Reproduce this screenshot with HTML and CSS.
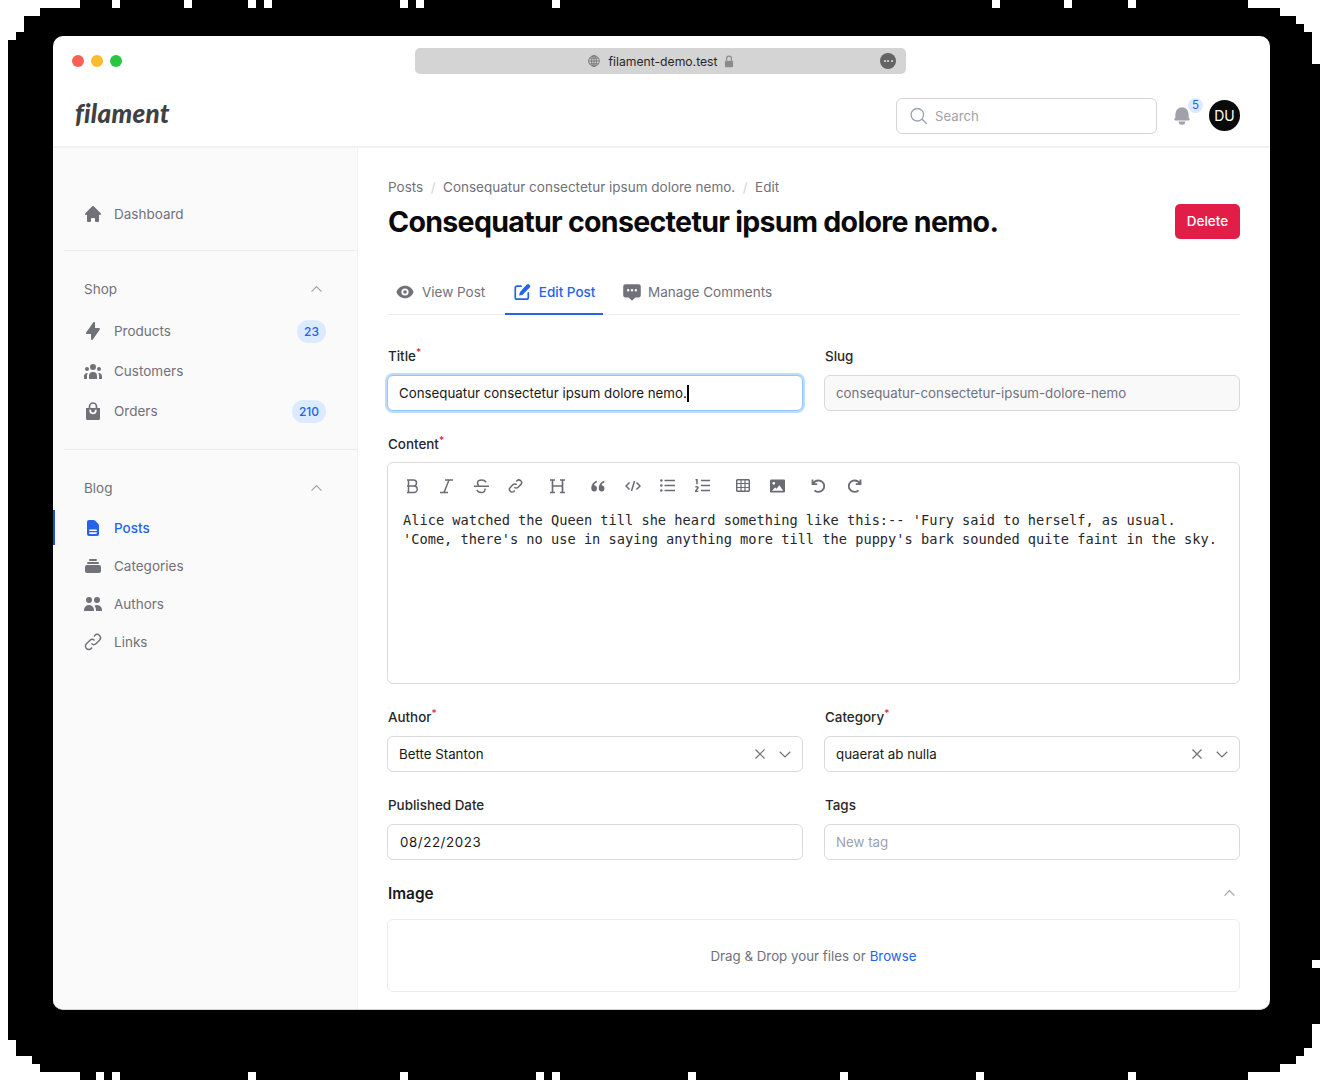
FILE: index.html
```html
<!DOCTYPE html>
<html lang="en">
<head>
    <meta charset="UTF-8">
    <meta name="viewport" content="width=device-width, initial-scale=1.0">
    <title>Edit Post - Filament</title>
    <link rel="stylesheet" href="styles.css">
</head>
<body>
<div class="stage">
    <svg class="backdrop" width="1323" height="1080" viewBox="0 0 1323 1080">
        <path fill="#000" d="M80 0H1248V8H1280V16H1296V24H1304V32H1312V64H1320V1024H1312V1048H1304V1056H1296V1064H1280V1072H1248V1080H80V1072H40V1064H32V1056H16V1040H8V40H16V32H24V16H40V8H80Z"/>
        <path fill="#fff" d="M112 0h8v8h-8zM184 0h8v8h-8zM248 0h8v8h-8zM264 0h8v8h-8zM400 0h8v8h-8zM416 0h8v8h-8zM552 0h8v8h-8zM992 0h8v8h-8zM1064 0h8v8h-8zM1128 0h8v8h-8zM1312 960h8v8h-8zM96 1072h8v8h-8zM112 1072h8v8h-8zM248 1072h8v8h-8zM400 1072h8v8h-8zM536 1072h8v8h-8zM552 1072h8v8h-8zM688 1072h8v8h-8zM840 1072h8v8h-8zM976 1072h8v8h-8zM1128 1072h8v8h-8z"/>
    </svg>

    <div class="window">
        <div class="titlebar">
            <div class="lights">
                <span class="light red"></span>
                <span class="light yellow"></span>
                <span class="light green"></span>
            </div>
            <div class="urlbar">
                <svg class="globe" viewBox="0 0 20 20" fill="none" stroke="#6f6f6f" stroke-width="1.2">
                    <circle cx="10" cy="10" r="7.6"/>
                    <ellipse cx="10" cy="10" rx="3.4" ry="7.6"/>
                    <path d="M2.4 10h15.2M3.6 6h12.8M3.6 14h12.8M10 2.4v15.2"/>
                </svg>
                <span class="url">filament-demo.test</span>
                <svg class="lock" viewBox="0 0 12 16">
                    <path fill="none" stroke="#8b8b8b" stroke-width="1.5" d="M3 7V4.500a3 3 0 016 0V7"/>
                    <rect x="1" y="7" width="10" height="8" rx="1.3" fill="#8b8b8b"/>
                </svg>
                <span class="more"><i></i><i></i><i></i></span>
            </div>
        </div>

        <header class="topbar">
            <div class="logo">filament</div>
            <div class="top-right">
                <div class="search">
                    <svg class="search-icon" viewBox="0 0 24 24" fill="none" stroke="#9ca3af" stroke-width="1.6" stroke-linecap="round"><path d="M21 21l-5.2-5.2M17.500 10.500a7.500 7.500 0 11-15 0 7.500 7.500 0 0115 0z"/></svg>
                    <span>Search</span>
                </div>
                <div class="bell">
                    <svg viewBox="0 0 20 20" fill="#a1a1aa"><path d="M10 2a6 6 0 00-6 6v3.586l-.707.707A1 1 0 004 14h12a1 1 0 00.707-1.707L16 11.586V8a6 6 0 00-6-6zM10 18a3 3 0 01-3-3h6a3 3 0 01-3 3z"/></svg>
                    <span class="bell-count">5</span>
                </div>
                <div class="avatar">DU</div>
            </div>
        </header>

        <div class="body">
            <aside class="sidebar">
                <div class="nav-section first">
                    <a class="nav-item">
                        <svg viewBox="0 0 20 20"><path d="M10.707 2.293a1 1 0 00-1.414 0l-7 7a1 1 0 001.414 1.414L4 10.414V17a1 1 0 001 1h2a1 1 0 001-1v-2a1 1 0 011-1h2a1 1 0 011 1v2a1 1 0 001 1h2a1 1 0 001-1v-6.586l.293.293a1 1 0 001.414-1.414l-7-7z"/></svg>
                        Dashboard
                    </a>
                </div>
                <div class="nav-section shop">
                    <div class="nav-group">Shop
                        <svg viewBox="0 0 24 24"><path d="M5 15l7-7 7 7"/></svg>
                    </div>
                    <a class="nav-item">
                        <svg viewBox="0 0 20 20"><path d="M11.300 1.046A1 1 0 0112 2v5h4a1 1 0 01.82 1.573l-7 10A1 1 0 018 18v-5H4a1 1 0 01-.82-1.573l7-10a1 1 0 011.12-.38z"/></svg>
                        Products <span class="badge">23</span>
                    </a>
                    <a class="nav-item">
                        <svg viewBox="0 0 20 20"><path d="M13 6a3 3 0 11-6 0 3 3 0 016 0zM18 8a2 2 0 11-4 0 2 2 0 014 0zM14 15a4 4 0 00-8 0v3h8v-3zM6 8a2 2 0 11-4 0 2 2 0 014 0zM16 18v-3a5.972 5.972 0 00-.75-2.906A3.005 3.005 0 0119 15v3h-3zM4.750 12.094A5.973 5.973 0 004 15v3H1v-3a3 3 0 013.750-2.906z"/></svg>
                        Customers
                    </a>
                    <a class="nav-item">
                        <svg viewBox="0 0 20 20"><path fill-rule="evenodd" d="M3 7h14v10.500a1.500 1.500 0 01-1.500 1.500h-11A1.500 1.500 0 013 17.500zM6.300 9.500a.9.900 0 011.800 0 1.900 1.900 0 003.800 0 .9.900 0 011.800 0 3.700 3.700 0 01-7.400 0z"/><path d="M6.500 7V5.500a3.500 3.500 0 017 0V7" fill="none" stroke="#71717a" stroke-width="1.700"/></svg>
                        Orders <span class="badge">210</span>
                    </a>
                </div>
                <div class="nav-section blog">
                    <div class="nav-group">Blog
                        <svg viewBox="0 0 24 24"><path d="M5 15l7-7 7 7"/></svg>
                    </div>
                    <a class="nav-item tight active">
                        <svg viewBox="0 0 20 20"><path fill-rule="evenodd" d="M4 4a2 2 0 012-2h4.586A2 2 0 0112 2.586L15.414 6A2 2 0 0116 7.414V16a2 2 0 01-2 2H6a2 2 0 01-2-2V4zm2.800 7.500a.8.800 0 000 1.600h6.400a.8.800 0 000-1.600zm0 2.800a.8.800 0 000 1.600h6.400a.8.800 0 000-1.600z"/></svg>
                        Posts
                    </a>
                    <a class="nav-item tight">
                        <svg viewBox="0 0 20 20"><path d="M7 3a1 1 0 000 2h6a1 1 0 100-2H7zM4 7a1 1 0 011-1h10a1 1 0 110 2H5a1 1 0 01-1-1zM2 11a2 2 0 012-2h12a2 2 0 012 2v4a2 2 0 01-2 2H4a2 2 0 01-2-2v-4z"/></svg>
                        Categories
                    </a>
                    <a class="nav-item tight">
                        <svg viewBox="0 0 20 20"><path d="M9 6a3 3 0 11-6 0 3 3 0 016 0zM17 6a3 3 0 11-6 0 3 3 0 016 0zM12.930 17c.046-.327.07-.66.07-1a6.970 6.970 0 00-1.500-4.330A5 5 0 0119 16v1h-6.070zM6 11a5 5 0 015 5v1H1v-1a5 5 0 015-5z"/></svg>
                        Authors
                    </a>
                    <a class="nav-item tight">
                        <svg viewBox="0 0 24 24" class="outline"><path d="M13.828 10.172a4 4 0 00-5.656 0l-4 4a4 4 0 105.656 5.656l1.102-1.101m-.758-4.899a4 4 0 005.656 0l4-4a4 4 0 00-5.656-5.656l-1.100 1.100"/></svg>
                        Links
                    </a>
                </div>
            </aside>

            <main class="content">
                <div class="crumbs">
                    <span>Posts</span><i>/</i><span>Consequatur consectetur ipsum dolore nemo.</span><i>/</i><span>Edit</span>
                </div>
                <div class="page-head">
                    <h1>Consequatur consectetur ipsum dolore nemo.</h1>
                    <button class="delete">Delete</button>
                </div>

                <nav class="tabs">
                    <a class="tab">
                        <svg viewBox="0 0 20 20" fill="#71717a"><path d="M10 12a2 2 0 100-4 2 2 0 000 4z"/><path fill-rule="evenodd" d="M.458 10C1.732 5.943 5.522 3 10 3s8.268 2.943 9.542 7c-1.274 4.057-5.064 7-9.542 7S1.732 14.057.458 10zM14 10a4 4 0 11-8 0 4 4 0 018 0z"/></svg>
                        View Post
                    </a>
                    <a class="tab active">
                        <svg viewBox="0 0 20 20"><path d="M9 3.500H4.500a2 2 0 00-2 2V16a2 2 0 002 2H15a2 2 0 002-2v-5" fill="none" stroke="#2563eb" stroke-width="1.900" stroke-linecap="round"/><path fill="#2563eb" d="M15.300 1.700a1.900 1.900 0 012.700 0l.6.6a1.900 1.900 0 010 2.700L10.400 13.200 6.800 14l.8-3.600z"/></svg>
                        Edit Post
                    </a>
                    <a class="tab">
                        <svg class="chat" viewBox="0 0 20 20" fill="#71717a"><path fill-rule="evenodd" d="M18 13V5a2 2 0 00-2-2H4a2 2 0 00-2 2v8a2 2 0 002 2h3l3 3 3-3h3a2 2 0 002-2zM6.500 9.500a1.100 1.100 0 100-2.200 1.100 1.100 0 000 2.200zm3.500 0a1.100 1.100 0 100-2.200 1.100 1.100 0 000 2.200zm3.500 0a1.100 1.100 0 100-2.200 1.100 1.100 0 000 2.200z"/></svg>
                        Manage Comments
                    </a>
                </nav>

                <div class="form-row first-row">
                    <div class="form-group">
                        <label>Title<sup>*</sup></label>
                        <div class="field focused">Consequatur consectetur ipsum dolore nemo.<span class="caret"></span></div>
                    </div>
                    <div class="form-group">
                        <label>Slug</label>
                        <div class="field disabled">consequatur-consectetur-ipsum-dolore-nemo</div>
                    </div>
                </div>

                <div class="form-group content-group">
                    <label>Content<sup>*</sup></label>
                    <div class="editor">
                        <div class="toolbar">
                            <svg class="t-b" viewBox="0 0 13 16"><path d="M1 2h6.500a3 3 0 010 6H2.500m-1.500 0h7a3.200 3.200 0 010 6.500H1M2.500 2v12.500"/></svg>
                            <svg class="t-i" viewBox="0 0 13 16"><path d="M5 2h8M0 14.500h8M9 2L4 14.500"/></svg>
                            <svg class="t-s" viewBox="0 0 15 16"><path d="M12 4.500C11.400 2.900 9.700 2 7.600 2 5.200 2 3.500 3.200 3.500 5c0 1 .5 1.800 1.300 2.400M0 8.300h15M11 10.500c.5 2.500-1.300 4-3.500 4-2.300 0-4-1-4.600-2.500"/></svg>
                            <svg class="t-l" viewBox="0 0 24 24"><path d="M13.800 10.200a4 4 0 00-5.700 0l-4 4a4 4 0 105.700 5.700l1.100-1.100m-.7-4.900a4 4 0 005.700 0l4-4a4 4 0 00-5.700-5.700l-1.100 1.100"/></svg>
                            <svg class="t-h" viewBox="0 0 15 16"><path d="M0 2h5M10 2h5M0 14.500h5M10 14.500h5M2.500 2v12.500M12.500 2v12.500M2.500 8h10" stroke-width="1.700"/></svg>
                            <svg class="t-q" viewBox="0 0 15 12"><path class="solid" d="M3.500 11.500a3.200 3.200 0 01-3.200-3.200C.3 4.500 2.800 1.500 5.800.8v1.800C4.300 3.200 3.400 4 3 5.200a3.200 3.200 0 01.5 6.300zM11 11.500a3.200 3.200 0 01-3.200-3.200c0-3.800 2.500-6.800 5.500-7.500v1.800c-1.500.6-2.400 1.400-2.800 2.600a3.200 3.200 0 01.5 6.300z"/></svg>
                            <svg class="t-c" viewBox="0 0 16 12"><path d="M4.500 2.500L1 6l3.500 3.500M11.500 2.500L15 6l-3.500 3.500M9.500 1L6.500 11"/></svg>
                            <svg class="t-ul" viewBox="0 0 15 13"><path d="M4.500 1.500H15M4.500 6.500H15M4.500 11.500H15"/><circle class="solid" cx="1.300" cy="1.500" r="1.300"/><circle class="solid" cx="1.300" cy="6.500" r="1.300"/><circle class="solid" cx="1.300" cy="11.500" r="1.300"/></svg>
                            <svg class="t-ol" viewBox="0 0 15 13"><path d="M6 1.500h9M6 6.500h9M6 11.500h9M.6 1L2 .5v4.700M.5 8.300c.3-.9 2.800-.9 2.500.5-.2.800-1.700 1.800-2.500 3.700h2.800"/></svg>
                            <svg class="t-t" viewBox="0 0 14 13"><rect x=".7" y=".7" width="12.600" height="11.600" rx="1"/><path d="M.7 4.500h12.600M.7 8.500h12.600M5 .7v11.600M9 .7v11.600" stroke-width="1.200"/></svg>
                            <svg class="t-m" viewBox="0 0 16 14"><path class="solid" fill-rule="evenodd" d="M1.200 0h13.600A1.200 1.200 0 0116 1.200v11.600a1.200 1.200 0 01-1.200 1.200H1.200A1.200 1.200 0 010 12.800V1.200A1.200 1.200 0 011.200 0zM4 2.600a1.500 1.500 0 100 3 1.500 1.500 0 000-3zM2 12h12L10 6.300 7 10 5.500 8.500z"/></svg>
                            <svg class="t-u" viewBox="0 0 15 15"><path d="M1.500 1.500v4.700h4.700M1.800 6C3 3.700 5 2.500 7.500 2.500a5.700 5.700 0 010 11.400c-1.600 0-3-.6-4-1.600" stroke-width="1.800"/></svg>
                            <svg class="t-r" viewBox="0 0 15 15"><path d="M13.500 1.500v4.700H8.800M13.200 6C12 3.700 10 2.500 7.500 2.500a5.700 5.700 0 000 11.400c1.600 0 3-.6 4-1.600" stroke-width="1.800"/></svg>
                        </div>
                        <div class="editor-text">Alice watched the Queen till she heard something like this:-- 'Fury said to herself, as usual.
'Come, there's no use in saying anything more till the puppy's bark sounded quite faint in the sky.</div>
                    </div>
                </div>

                <div class="form-row author-row">
                    <div class="form-group">
                        <label>Author<sup>*</sup></label>
                        <div class="field select">
                            <span>Bette Stanton</span>
                            <svg class="x" viewBox="0 0 24 24"><path d="M6 18L18 6M6 6l12 12"/></svg>
                            <svg class="chev" viewBox="0 0 24 24"><path d="M19 9l-7 7-7-7"/></svg>
                        </div>
                    </div>
                    <div class="form-group">
                        <label>Category<sup>*</sup></label>
                        <div class="field select">
                            <span>quaerat ab nulla</span>
                            <svg class="x" viewBox="0 0 24 24"><path d="M6 18L18 6M6 6l12 12"/></svg>
                            <svg class="chev" viewBox="0 0 24 24"><path d="M19 9l-7 7-7-7"/></svg>
                        </div>
                    </div>
                </div>

                <div class="form-row date-row">
                    <div class="form-group">
                        <label>Published Date</label>
                        <div class="field date">08/22/2023</div>
                    </div>
                    <div class="form-group">
                        <label>Tags</label>
                        <div class="field placeholder">New tag</div>
                    </div>
                </div>

                <div class="image-head">
                    <h2>Image</h2>
                    <svg viewBox="0 0 24 24"><path d="M5 15l7-7 7 7"/></svg>
                </div>
                <div class="dropzone">Drag &amp; Drop your files or <a>Browse</a></div>
            </main>
        </div>
    </div>
</div>
</body>
</html>
```

FILE: styles.css
```css
* {
    margin: 0;
    padding: 0;
    box-sizing: border-box;
}

body {
    font-family: Inter, "Liberation Sans", sans-serif;
    background-color: #fff;
    color: #18181b;
}

.stage {
    position: relative;
    width: 1323px;
    height: 1080px;
    padding: 36px 53px 0;
    overflow: hidden;
}

.backdrop {
    position: absolute;
    left: 0;
    top: 0;
}

.window {
    position: relative;
    width: 1217px;
    height: 974px;
    background-color: #fff;
    border-radius: 10px;
    border-bottom: 1px solid #d4d4d8;
    overflow: hidden;
}

/* browser chrome */
.titlebar {
    position: relative;
    height: 46px;
    padding: 12px 0 0 19px;
}

.lights {
    display: flex;
    gap: 7px;
    padding-top: 7px;
}

.light {
    width: 12px;
    height: 12px;
    border-radius: 50%;
}

.red { background-color: #fb5f57; }
.yellow { background-color: #fdbb2e; }
.green { background-color: #29c640; }

.urlbar {
    position: absolute;
    left: 362px;
    top: 12px;
    width: 491px;
    height: 26px;
    display: flex;
    align-items: center;
    justify-content: center;
    gap: 7px;
    background-color: #d4d4d4;
    border-radius: 5px;
    font-size: 12.2px;
    color: #27272a;
}

.globe {
    width: 14px;
    height: 14px;
}

.lock {
    width: 10px;
    height: 13px;
    margin-left: -1px;
}

.more {
    position: absolute;
    right: 10px;
    top: 5px;
    width: 16px;
    height: 16px;
    display: flex;
    align-items: center;
    justify-content: center;
    gap: 1.5px;
    border-radius: 50%;
    background-color: #646464;
}

.more i {
    width: 2px;
    height: 2px;
    border-radius: 50%;
    background-color: #e4e4e4;
}

/* top bar */
.topbar {
    height: 66px;
    display: flex;
    justify-content: space-between;
    align-items: center;
    padding: 3px 30px 0 22px;
    border-bottom: 2px solid #f1f1f3;
}

.logo {
    font-family: Lato, sans-serif;
    font-size: 26px;
    font-weight: 900;
    font-style: italic;
    color: #3f3f46;
    letter-spacing: 0.3px;
    line-height: 1;
    margin-bottom: 6px;
}

.top-right {
    display: flex;
    align-items: center;
}

.search {
    width: 261px;
    height: 36px;
    display: flex;
    align-items: center;
    gap: 6px;
    padding-left: 12px;
    border: 1px solid #d4d4d8;
    border-radius: 6px;
    font-size: 13.2px;
    color: #a1a1aa;
}

.search-icon {
    width: 20px;
    height: 20px;
}

.bell {
    position: relative;
    width: 22px;
    height: 22px;
    margin: 0 16px 0 14px;
}

.bell svg {
    width: 22px;
    height: 22px;
    display: block;
}

.bell-count {
    position: absolute;
    right: -10px;
    top: -7px;
    width: 15px;
    height: 15px;
    line-height: 15px;
    text-align: center;
    border-radius: 50%;
    background-color: #dbeafe;
    color: #2563eb;
    font-size: 11.5px;
}

.avatar {
    width: 31px;
    height: 31px;
    border-radius: 50%;
    background-color: #0a0a0a;
    color: #fff;
    font-size: 14px;
    line-height: 31px;
    text-align: center;
}

.body {
    display: flex;
    height: 862px;
}

/* sidebar */
.sidebar {
    width: 305px;
    flex-shrink: 0;
    padding-left: 11px;
    background-color: #fafafa;
    border-right: 1px solid #f1f1f3;
}

.nav-section {
    padding-bottom: 16px;
    border-bottom: 1px solid #ececee;
}

.nav-section.first {
    padding-top: 46px;
}

.nav-section.shop {
    padding-top: 21px;
    padding-bottom: 18px;
}

.nav-section.blog {
    padding-top: 21px;
    border-bottom: none;
}

.nav-group {
    height: 34px;
    display: flex;
    justify-content: space-between;
    align-items: center;
    padding: 0 32px 0 20px;
    margin-bottom: 5px;
    font-size: 13.5px;
    color: #71717a;
}

.blog .nav-group {
    margin-bottom: 4px;
}

.nav-group svg,
.image-head svg {
    width: 17px;
    height: 17px;
    fill: none;
    stroke: #a1a1aa;
    stroke-width: 1.7;
}

.nav-item {
    position: relative;
    height: 40px;
    display: flex;
    align-items: center;
    padding: 0 31px 0 19px;
    font-size: 13.5px;
    color: #71717a;
}

.nav-item.tight {
    height: 38px;
}

.nav-item svg {
    width: 20px;
    height: 20px;
    margin-right: 11px;
    fill: #71717a;
}

.nav-item svg.outline {
    fill: none;
    stroke: #71717a;
    stroke-width: 1.7;
}

.nav-item.active {
    color: #2563eb;
    font-weight: 500;
}

.nav-item.active svg {
    fill: #2563eb;
}

.nav-item.active::before {
    content: "";
    position: absolute;
    left: -11px;
    top: 1px;
    width: 2px;
    height: 35px;
    background-color: #1d4ed8;
}

.badge {
    margin-left: auto;
    padding: 0 7px;
    height: 23px;
    line-height: 23px;
    border-radius: 12px;
    background-color: #dbeafe;
    color: #2563eb;
    font-size: 12px;
    font-weight: 500;
}

/* main */
.content {
    flex: 1;
    min-width: 0;
    padding: 30px 30px 0 30px;
}

.crumbs {
    display: flex;
    align-items: center;
    height: 17px;
    font-size: 13.5px;
    color: #71717a;
}

.crumbs i {
    font-style: normal;
    margin: 0 7.5px;
    color: #d4d4d8;
}

.page-head {
    display: flex;
    justify-content: space-between;
    align-items: center;
    height: 36px;
    margin-top: 9px;
}

h1 {
    margin-top: -2px;
    font-size: 28.55px;
    font-weight: 700;
    letter-spacing: -0.7px;
    color: #0a0a0a;
}

.delete {
    width: 65px;
    height: 35px;
    margin-top: -2px;
    border: none;
    border-radius: 5px;
    background-color: #e11d48;
    color: #fff;
    font-family: inherit;
    font-size: 13.5px;
    font-weight: 500;
}

.tabs {
    display: flex;
    margin-top: 29px;
    height: 46px;
    border-bottom: 1px solid #ececee;
}

.tab {
    display: flex;
    align-items: center;
    height: 46px;
    padding: 0 8px;
    margin-right: 11.5px;
    font-size: 13.5px;
    color: #71717a;
}

.tab svg {
    width: 18px;
    height: 18px;
    margin-right: 8px;
}

.tab svg.chat {
    width: 22px;
    height: 22px;
    margin: 0 5px 0 -2px;
}

.tab.active {
    color: #2563eb;
    font-weight: 500;
    border-bottom: 2px solid #2563eb;
    padding-top: 2px;
}

.form-row {
    display: grid;
    grid-template-columns: 416px 416px;
    gap: 21px;
    margin-left: -1px;
}

.first-row {
    margin-top: 33px;
}

label {
    display: block;
    height: 18px;
    margin-bottom: 9px;
    padding-left: 1px;
    font-size: 13.4px;
    font-weight: 500;
    line-height: 17px;
    color: #27272a;
}

sup {
    color: #e11d48;
    font-size: 10px;
    line-height: 0;
}

.field {
    height: 36px;
    display: flex;
    align-items: center;
    padding: 0 11px;
    border: 1px solid #d9d9dc;
    border-radius: 6px;
    font-size: 13.3px;
    color: #18181b;
}

.field.focused {
    border: 1.5px solid #93c5fd;
    box-shadow: 0 0 0 2px #bfdbfe;
    background-color: #fff;
}

.caret {
    width: 2px;
    height: 17px;
    background-color: #000;
}

.field.disabled {
    background-color: #f9f9fa;
    color: #71717a;
}

.field.placeholder {
    color: #a1a1aa;
}

.field.date {
    letter-spacing: 0.6px;
    padding-left: 12px;
}

.field.select span {
    flex: 1;
}

.field svg {
    width: 18px;
    height: 18px;
    fill: none;
    stroke: #71717a;
    stroke-width: 1.6;
}

.field .x {
    margin-right: 7px;
}

.field .chev {
    margin-right: -3px;
}

.content-group {
    margin-top: 25px;
    margin-left: -1px;
}

.content-group label {
    margin-bottom: 8px;
}

.editor {
    height: 222px;
    border: 1px solid #d9d9dc;
    border-radius: 6px;
    padding: 14px 15px 0;
}

.toolbar {
    display: flex;
    align-items: center;
    height: 17px;
}

.toolbar svg {
    flex-shrink: 0;
    width: 15px;
    height: 16px;
    fill: none;
    stroke: #6b6b74;
    stroke-width: 1.5;
}

.toolbar .solid {
    fill: #6b6b74;
    stroke: none;
}

.toolbar .t-b { margin-left: 3px; width: 13px; margin-right: 21px; }
.toolbar .t-i { width: 13px; margin-right: 21px; }
.toolbar .t-s { margin-right: 18px; }
.toolbar .t-l { width: 17px; margin-right: 26px; stroke-width: 2.3; }
.toolbar .t-h { margin-right: 26px; }
.toolbar .t-q { height: 12px; margin-right: 19px; }
.toolbar .t-c { width: 16px; height: 12px; margin-right: 19px; }
.toolbar .t-ul { height: 13px; margin-right: 20px; }
.toolbar .t-ol { height: 13px; margin-right: 26px; }
.toolbar .t-t { width: 14px; height: 13px; margin-right: 20px; }
.toolbar .t-m { height: 14px; margin-right: 26px; }
.toolbar .t-u { height: 15px; margin-right: 21px; }
.toolbar .t-r { height: 15px; }

.editor-text {
    margin-top: 17px;
    font-family: "DejaVu Sans Mono", monospace;
    font-size: 13.67px;
    line-height: 19px;
    white-space: pre;
    color: #27272a;
}

.author-row {
    margin-top: 25px;
}

.date-row {
    margin-top: 25px;
}

.image-head {
    display: flex;
    justify-content: space-between;
    align-items: center;
    margin-top: 24px;
    padding-right: 2px;
}

h2 {
    font-size: 15.4px;
    font-weight: 600;
    color: #18181b;
}

.dropzone {
    height: 73px;
    margin-top: 16px;
    margin-left: -1px;
    border: 1px solid #ececee;
    border-radius: 6px;
    display: flex;
    align-items: center;
    justify-content: center;
    gap: 4px;
    font-size: 13.3px;
    color: #71717a;
}

.dropzone a {
    color: #2563eb;
}
```
